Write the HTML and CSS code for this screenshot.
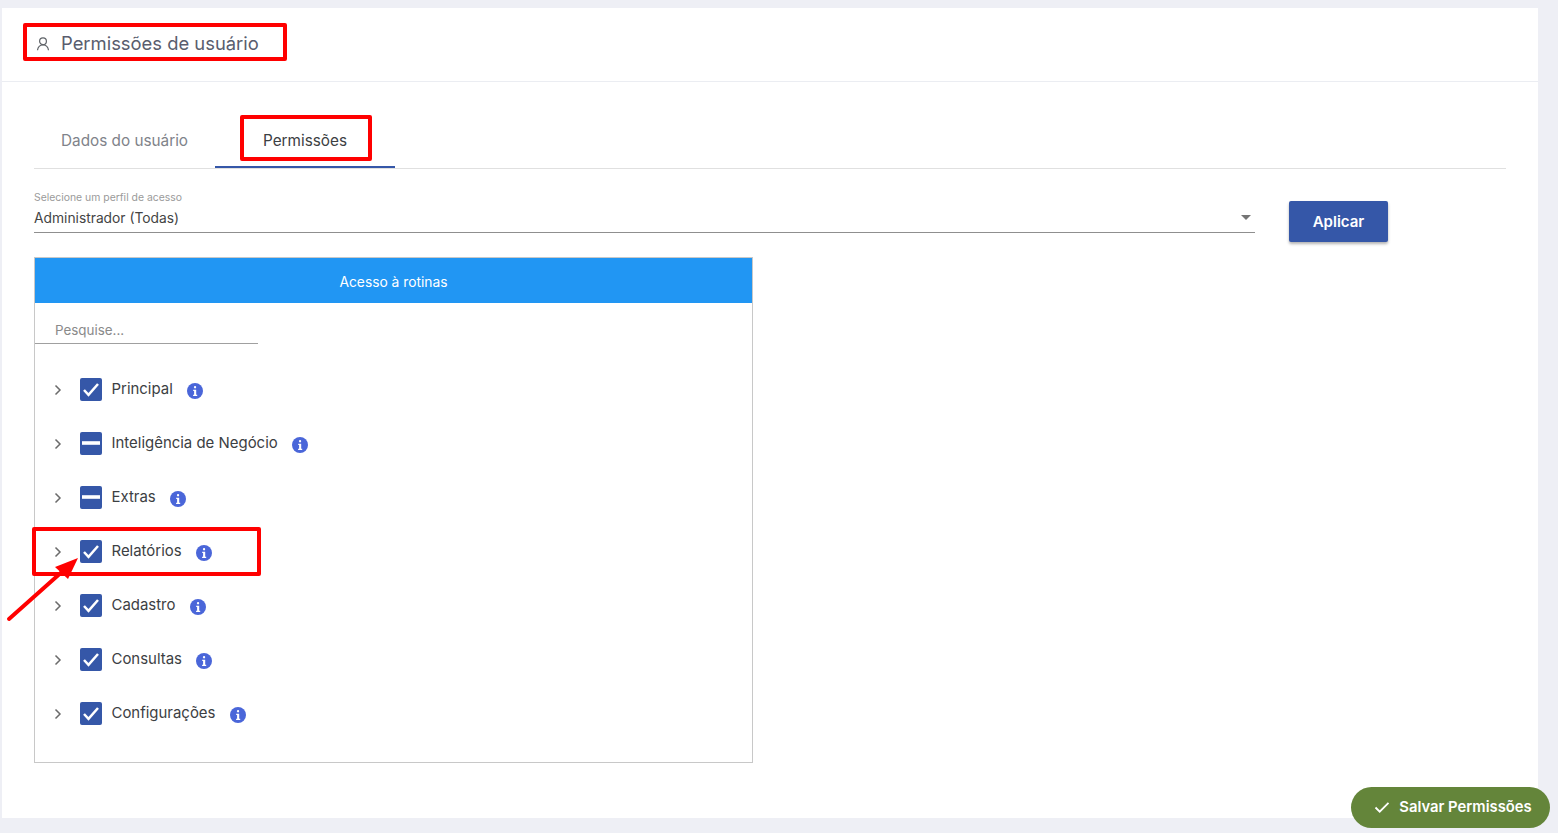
FILE: index.html
```html
<!DOCTYPE html>
<html lang="pt-BR">
<head>
<meta charset="utf-8">
<title>Permissões de usuário</title>
<link rel="stylesheet" href="styles.css">
</head>
<body>
<main class="card">
  <header class="card-head">
    <svg class="user-icon" viewBox="0 0 16 16" width="16" height="16"><circle cx="8" cy="5.2" r="3.4"/><path d="M2.5 14.2c.4-3.2 2.6-5.2 5.5-5.2s5.100 2 5.500 5.200"/></svg>
    <h1 class="title">Permissões de usuário</h1>
  </header>
  <div class="card-body">
    <nav class="tabs">
      <div class="tab">Dados do usuário</div>
      <div class="tab tab-active">Permissões</div>
    </nav>
    <div class="profile-row">
      <div class="select">
        <div class="select-label">Selecione um perfil de acesso</div>
        <div class="select-value"><span>Administrador (Todas)</span><i class="caret"></i></div>
      </div>
      <button class="apply">Aplicar</button>
    </div>
    <section class="panel">
      <div class="panel-head">Acesso à rotinas</div>
      <div class="search">Pesquise...</div>
      <ul class="tree">
        <li class="row"><svg class="chev" viewBox="0 0 10 12"><path d="M2.500 1.500 7 6l-4.500 4.500"/></svg><span class="box"><svg viewBox="0 0 22 22"><path d="M4 11.500l4.500 4.800L18 5.500"/></svg></span><span class="label">Principal</span><svg class="info" viewBox="0 0 16 16"><circle cx="8" cy="8" r="8"/><rect x="6.900" y="3.100" width="2.300" height="2.300" rx="1.100"/><path d="M6.200 6.700h3v5h1v1.300H6.100v-1.300h1v-3.700h-.900z"/></svg></li>
        <li class="row"><svg class="chev" viewBox="0 0 10 12"><path d="M2.500 1.500 7 6l-4.500 4.500"/></svg><span class="box"><svg viewBox="0 0 22 22"><path class="dash" d="M2 10.500h18"/></svg></span><span class="label">Inteligência de Negócio</span><svg class="info" viewBox="0 0 16 16"><circle cx="8" cy="8" r="8"/><rect x="6.900" y="3.100" width="2.300" height="2.300" rx="1.100"/><path d="M6.200 6.700h3v5h1v1.300H6.100v-1.300h1v-3.700h-.900z"/></svg></li>
        <li class="row"><svg class="chev" viewBox="0 0 10 12"><path d="M2.500 1.500 7 6l-4.500 4.500"/></svg><span class="box"><svg viewBox="0 0 22 22"><path class="dash" d="M2 10.500h18"/></svg></span><span class="label">Extras</span><svg class="info" viewBox="0 0 16 16"><circle cx="8" cy="8" r="8"/><rect x="6.900" y="3.100" width="2.300" height="2.300" rx="1.100"/><path d="M6.200 6.700h3v5h1v1.300H6.100v-1.300h1v-3.700h-.900z"/></svg></li>
        <li class="row"><svg class="chev" viewBox="0 0 10 12"><path d="M2.500 1.500 7 6l-4.500 4.500"/></svg><span class="box"><svg viewBox="0 0 22 22"><path d="M4 11.500l4.500 4.800L18 5.500"/></svg></span><span class="label">Relatórios</span><svg class="info" viewBox="0 0 16 16"><circle cx="8" cy="8" r="8"/><rect x="6.900" y="3.100" width="2.300" height="2.300" rx="1.100"/><path d="M6.200 6.700h3v5h1v1.300H6.100v-1.300h1v-3.700h-.900z"/></svg></li>
        <li class="row"><svg class="chev" viewBox="0 0 10 12"><path d="M2.500 1.500 7 6l-4.500 4.500"/></svg><span class="box"><svg viewBox="0 0 22 22"><path d="M4 11.500l4.500 4.800L18 5.500"/></svg></span><span class="label">Cadastro</span><svg class="info" viewBox="0 0 16 16"><circle cx="8" cy="8" r="8"/><rect x="6.900" y="3.100" width="2.300" height="2.300" rx="1.100"/><path d="M6.200 6.700h3v5h1v1.300H6.100v-1.300h1v-3.700h-.900z"/></svg></li>
        <li class="row"><svg class="chev" viewBox="0 0 10 12"><path d="M2.500 1.500 7 6l-4.500 4.500"/></svg><span class="box"><svg viewBox="0 0 22 22"><path d="M4 11.500l4.500 4.800L18 5.500"/></svg></span><span class="label">Consultas</span><svg class="info" viewBox="0 0 16 16"><circle cx="8" cy="8" r="8"/><rect x="6.900" y="3.100" width="2.300" height="2.300" rx="1.100"/><path d="M6.200 6.700h3v5h1v1.300H6.100v-1.300h1v-3.700h-.900z"/></svg></li>
        <li class="row"><svg class="chev" viewBox="0 0 10 12"><path d="M2.500 1.500 7 6l-4.500 4.500"/></svg><span class="box"><svg viewBox="0 0 22 22"><path d="M4 11.500l4.500 4.800L18 5.500"/></svg></span><span class="label">Configurações</span><svg class="info" viewBox="0 0 16 16"><circle cx="8" cy="8" r="8"/><rect x="6.900" y="3.100" width="2.300" height="2.300" rx="1.100"/><path d="M6.200 6.700h3v5h1v1.300H6.100v-1.300h1v-3.700h-.900z"/></svg></li>
      </ul>
    </section>
  </div>
</main>
<button class="save"><svg viewBox="0 0 16 16" width="16" height="16"><path d="M1.500 8.500l4.200 4.200L14.500 3.800"/></svg>Salvar Permissões</button>
<div class="mark mark-title"></div>
<div class="mark mark-tab"></div>
<div class="mark mark-row"></div>
<svg class="arrow" viewBox="0 0 80 70" width="80" height="70"><path class="arrow-line" d="M3 61 L58 12"/><path class="arrow-head" d="M72 0 L49 9 L62 21z"/></svg>
</body>
</html>
```
FILE: styles.css
```css
* { box-sizing: border-box; }
html, body { height: 100%; }
body {
  margin: 0;
  padding: 8px 20px 15px 2px;
  background: #eeeff5;
  font-family: "Inter", "Roboto", "Liberation Sans", sans-serif;
  color: #3c4043;
  overflow: hidden;
}
.card {
  height: 810px;
  background: #fff;
  display: flex;
  flex-direction: column;
}
.card-head {
  height: 74px;
  flex: none;
  border-bottom: 1px solid #ebedf2;
  display: flex;
  align-items: center;
  padding-left: 33px;
  padding-bottom: 3px;
}
.user-icon { fill: none; stroke: #5f6368; stroke-width: 1.200; margin-top: 2px; }
.title {
  margin: 0 0 0 10px;
  font-size: 18.400px;
  font-weight: 400;
  color: #595d6e;
}
.card-body { padding: 0 32px; }
.tabs {
  margin-top: 31px;
  height: 56px;
  display: flex;
  border-bottom: 1px solid #e0e0e0;
}
.tab {
  width: 181px;
  height: 55px;
  display: flex;
  align-items: center;
  padding-left: 27px;
  font-size: 15.300px;
  color: #80838a;
}
.tab-active {
  width: 180px;
  padding-left: 48px;
  padding-top: 2px;
  color: #3c4043;
  border-bottom: 2px solid #3557a8;
}
.profile-row {
  display: flex;
  align-items: flex-start;
  margin-top: 22px;
  height: 66px;
}
.select { width: 1221px; }
.select-label { font-size: 10.400px; line-height: 13px; color: #9a9a9a; }
.select-value {
  height: 29px;
  display: flex;
  align-items: center;
  justify-content: space-between;
  font-size: 13.800px;
  color: #444;
  border-bottom: 1px solid #8f8f8f;
  padding: 0 4px 1px 0;
}
.caret {
  width: 0;
  height: 0;
  border-left: 5.500px solid transparent;
  border-right: 5.500px solid transparent;
  border-top: 5px solid #757575;
}
.apply {
  margin: 10px 0 0 34px;
  width: 99px;
  height: 41px;
  border: 0;
  border-radius: 2px;
  background: #3557a8;
  color: #fff;
  font: 600 15px "Inter", "Roboto", sans-serif;
  box-shadow: 0 2px 3px rgba(0,0,0,.3);
}
.panel {
  width: 719px;
  height: 506px;
  border: 1px solid #c8c8c8;
}
.panel-head {
  height: 45px;
  padding-top: 2px;
  background: #2196f3;
  color: #fff;
  font-size: 13.800px;
  display: flex;
  align-items: center;
  justify-content: center;
}
.search {
  width: 223px;
  height: 41px;
  padding: 19px 0 0 20px;
  font-size: 13.400px;
  line-height: 16px;
  color: #8a8a8a;
  border-bottom: 1px solid #a0a0a0;
}
.tree { list-style: none; margin: 19px 0 0; padding: 0; }
.row {
  height: 54px;
  display: flex;
  align-items: center;
  padding-left: 18px;
}
.chev { width: 10px; height: 12px; fill: none; stroke: #6b6b6b; stroke-width: 1.500; }
.box {
  width: 22px;
  height: 23px;
  margin: -2px 0 0 17px;
  border-radius: 2px;
  background: #3557a8;
  display: block;
}
.box svg { display: block; width: 22px; height: 23px; fill: none; stroke: #fff; stroke-width: 2.500; }
.box .dash { stroke-width: 3.600; }
.label { margin: -3px 0 0 9.500px; font-size: 14.950px; color: #3c4043; }
.info { width: 16px; height: 16px; margin: 2px 0 0 14.500px; fill: #4a66d9; }
.info rect, .info path { fill: #fff; }
.save {
  position: fixed;
  left: 1351px;
  top: 787px;
  width: 199px;
  height: 41px;
  border: 0;
  border-radius: 21px;
  background: #64853a;
  color: #fff;
  font: 600 14.800px "Inter", "Roboto", sans-serif;
  display: flex;
  align-items: center;
  justify-content: center;
  gap: 9px;
  padding: 0 0 2px 5px;
}
.save svg { fill: none; stroke: #fff; stroke-width: 1.800; }
.mark { position: fixed; border: 4px solid #f00; border-radius: 2px; pointer-events: none; }
.mark-title { left: 23px; top: 23px; width: 264px; height: 38px; }
.mark-tab { left: 240px; top: 115px; width: 132px; height: 46px; }
.mark-row { left: 32px; top: 527px; width: 229px; height: 49px; }
.arrow { position: fixed; left: 6px; top: 558px; }
.arrow-line { fill: none; stroke: #f00; stroke-width: 4; stroke-linecap: round; }
.arrow-head { fill: #f00; }
```
